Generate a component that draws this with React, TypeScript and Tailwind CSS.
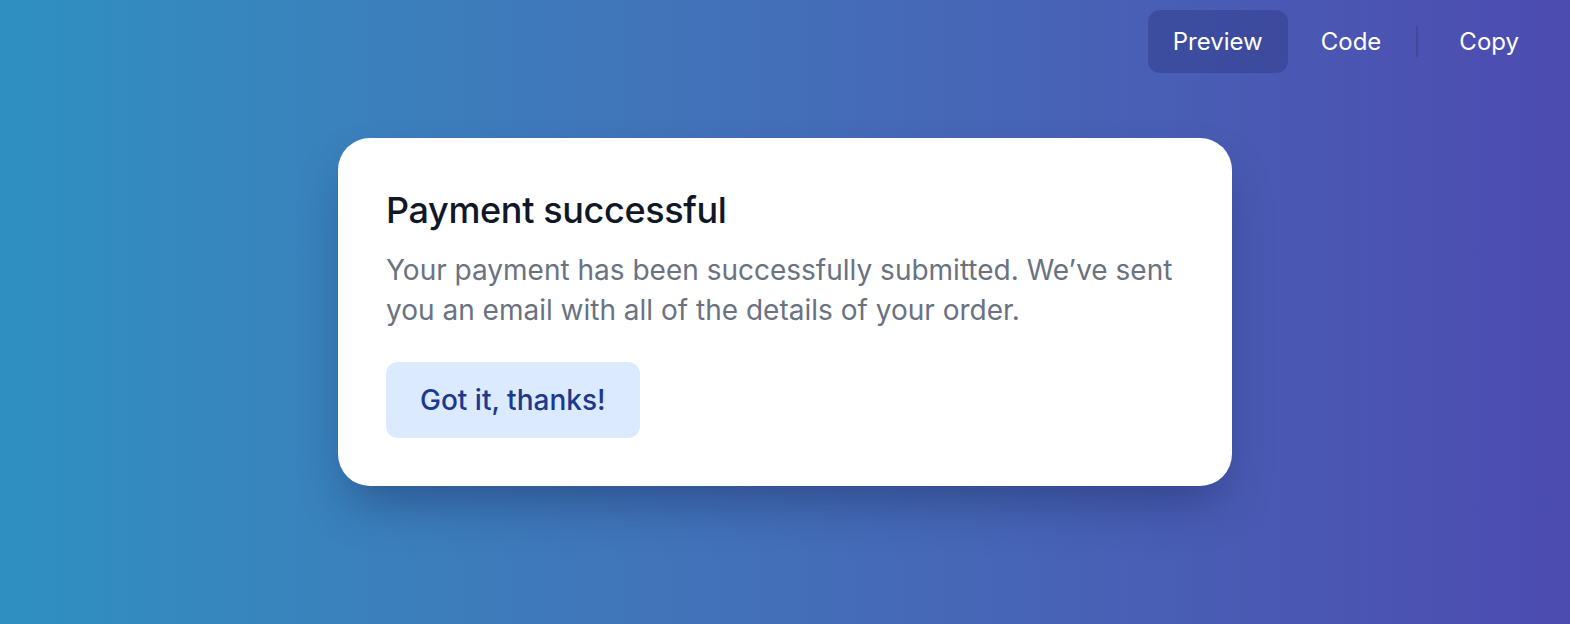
import React from 'react';

const font = { fontFamily: 'Inter, "Noto Sans", sans-serif' };

const NavButton: React.FC<{ label: string; active?: boolean }> = ({ label, active }) => (
  <button
    className={`rounded-xl px-[25px] py-[16px] text-[24px] leading-[31px] font-normal text-white ${
      active ? 'bg-[#2a3580]/40' : ''
    }`}
  >
    {label}
  </button>
);

export default function App() {
  return (
    <div
      className="flex min-h-screen flex-col bg-linear-to-r from-[#2e90c0] to-[#4c4bb0]"
      style={font}
    >
      {/* Toolbar */}
      <div className="flex items-center justify-end gap-2 pt-[10px] pr-[26px]">
        <NavButton label="Preview" active />
        <NavButton label="Code" />
        <div className="mx-[2px] h-[31px] w-[2px] bg-[#3a4796]/70" />
        <div className="ml-[6px]">
          <NavButton label="Copy" />
        </div>
      </div>

      {/* Stage */}
      <div className="flex flex-1 items-center justify-center pb-[73px]">
        <div className="w-[894px] rounded-[32px] bg-white p-12 shadow-[0_25px_50px_-12px_rgba(20,30,80,0.45)]">
          <h3 className="text-[36px] leading-[48px] font-medium tracking-[-0.01em] text-gray-900">
            Payment successful
          </h3>
          <p className="mt-4 text-[28px] leading-[40px] text-gray-500">
            Your payment has been successfully submitted. We’ve sent you an email with all of the
            details of your order.
          </p>
          <button className="mt-8 rounded-xl bg-blue-100 px-[34px] py-[18px] text-[28px] leading-[40px] font-medium text-blue-900">
            Got it, thanks!
          </button>
        </div>
      </div>
    </div>
  );
}
